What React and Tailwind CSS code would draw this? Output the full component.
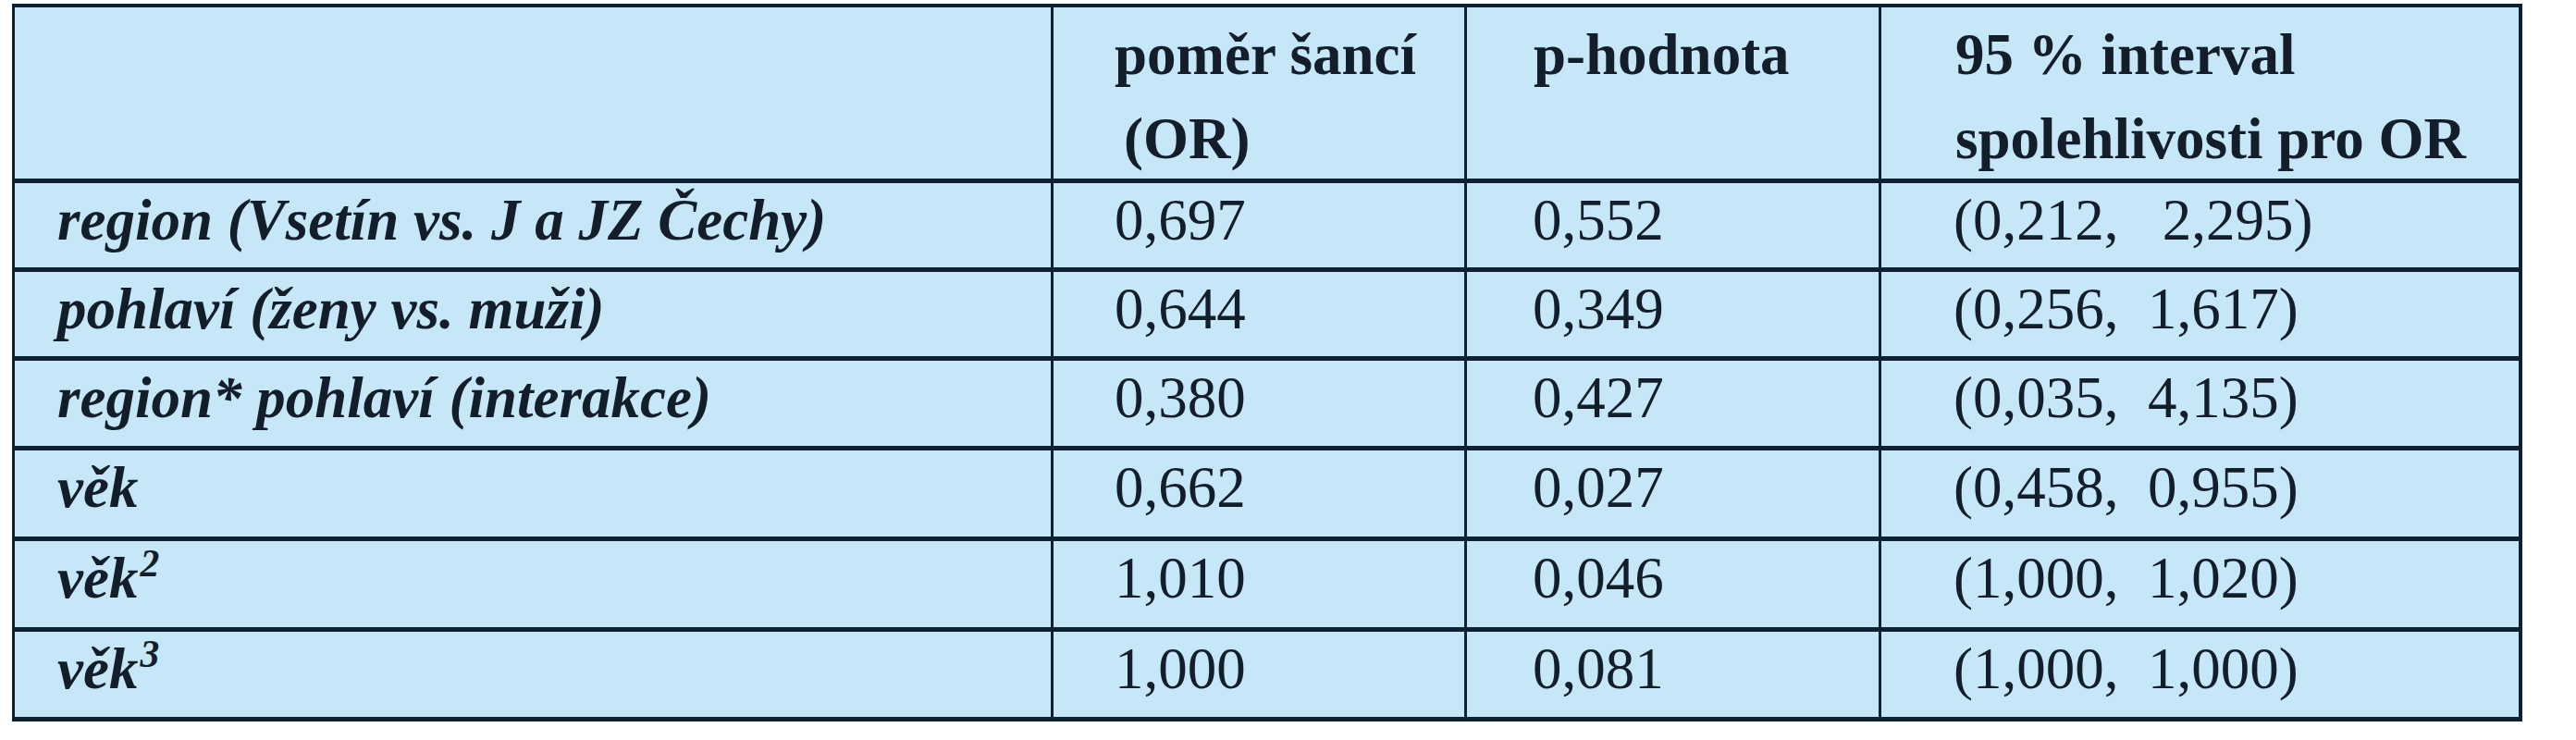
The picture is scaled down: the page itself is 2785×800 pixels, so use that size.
import React from "react";

const rows = [
  { label: <>region (Vsetín vs. J a JZ Čechy)</>, or: "0,697", p: "0,552", ci: "(0,212,   2,295)" },
  { label: <>pohlaví (ženy vs. muži)</>, or: "0,644", p: "0,349", ci: "(0,256,  1,617)" },
  { label: <>region* pohlaví (interakce)</>, or: "0,380", p: "0,427", ci: "(0,035,  4,135)" },
  { label: <>věk</>, or: "0,662", p: "0,027", ci: "(0,458,  0,955)" },
  {
    label: (
      <>
        věk<sup className="text-[0.66em] relative -top-[0.55em] align-baseline pl-[2px]">2</sup>
      </>
    ),
    or: "1,010",
    p: "0,046",
    ci: "(1,000,  1,020)",
  },
  {
    label: (
      <>
        věk<sup className="text-[0.66em] relative -top-[0.55em] align-baseline pl-[2px]">3</sup>
      </>
    ),
    or: "1,000",
    p: "0,081",
    ci: "(1,000,  1,000)",
  },
];

const rowHeights = ["h-[91px]", "h-[91px]", "h-[92px]", "h-[93px]", "h-[93px]", "h-[92px]"];

export default function App() {
  return (
    <div className="min-h-screen bg-white pt-[4px] pl-[13px] font-['Liberation_Serif','Times_New_Roman',serif] text-[63px] text-[#131e2a]">
      <div className="inline-grid grid-cols-[1120px_444px_445px_689px] gap-x-[3px] gap-y-[5px] bg-[#0e2132] pt-[4px] pb-[5px] pl-[3px] pr-[4px]">
        {/* header */}
        <div className="h-[185px] bg-[#c5e7f8]" />
        <div className="h-[185px] bg-[#c5e7f8] pl-[66px] pt-[6px] font-bold leading-[91px]">
          <div>poměr šancí</div>
          <div className="pl-[10px]">(OR)</div>
        </div>
        <div className="h-[185px] bg-[#c5e7f8] pl-[72px] pt-[6px] font-bold leading-[91px]">
          p-hodnota
        </div>
        <div className="h-[185px] bg-[#c5e7f8] pl-[80px] pt-[6px] font-bold leading-[91px]">
          <div>95 % interval</div>
          <div>spolehlivosti pro OR</div>
        </div>

        {rows.map((r, i) => (
          <React.Fragment key={i}>
            <div className={`${rowHeights[i]} bg-[#c5e7f8] pl-[46px] font-bold italic leading-[81px] whitespace-nowrap`}>
              {r.label}
            </div>
            <div className={`${rowHeights[i]} bg-[#c5e7f8] pl-[66px] leading-[81px]`}>{r.or}</div>
            <div className={`${rowHeights[i]} bg-[#c5e7f8] pl-[71px] leading-[81px]`}>{r.p}</div>
            <div className={`${rowHeights[i]} bg-[#c5e7f8] pl-[78px] leading-[81px] whitespace-pre`}>{r.ci}</div>
          </React.Fragment>
        ))}
      </div>
    </div>
  );
}
